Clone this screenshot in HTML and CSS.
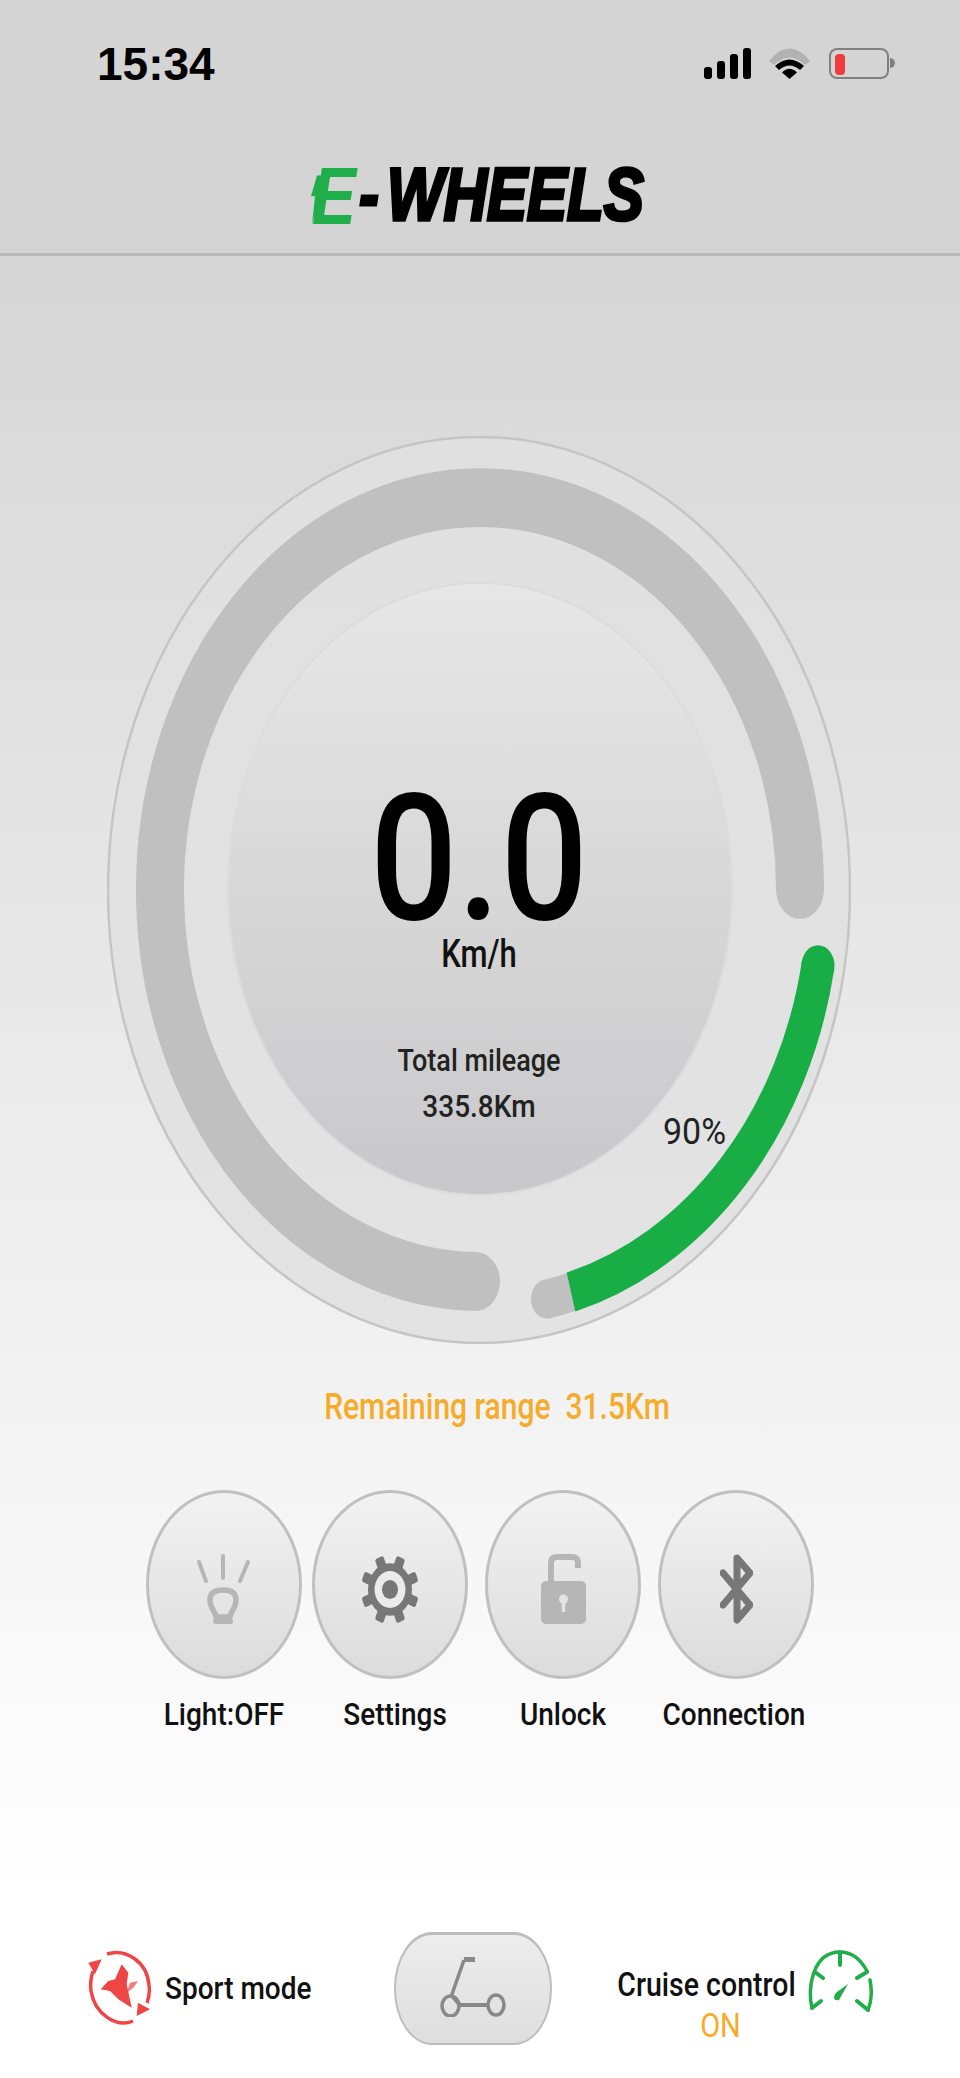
FILE: index.html
```html
<!DOCTYPE html>
<html lang="en">

<head>
    <meta charset="UTF-8">
    <meta name="viewport" content="width=device-width, initial-scale=1.0">
    <title>E-Wheels</title>
    <link rel="stylesheet" href="styles.css">
</head>

<body>
    <div class="page">
        <div class="top">
            <div class="status">
                <span class="time">15:34</span>
                <div class="status-icons">
                    <svg class="signal" width="47" height="31" viewBox="0 0 47 31">
                        <rect x="0" y="19" width="8" height="12" rx="3" />
                        <rect x="13" y="13" width="8" height="18" rx="3" />
                        <rect x="26" y="6" width="8" height="25" rx="3" />
                        <rect x="39" y="0" width="8" height="31" rx="3" />
                    </svg>
                    <svg class="wifi" width="42" height="31" viewBox="0 0 42 31">
                        <path d="M0 13 Q20.5 -12 41 13 L36 17 Q20.5 2 5 17 Z" fill="#b2b2b2" />
                        <path d="M6 18 Q20.5 5 35 18 L31 22 Q20.5 13 10 22 Z" fill="#000" />
                        <path d="M20.5 31 L13 24.5 Q20.5 17 28 24.5 Z" fill="#000" />
                    </svg>
                    <div class="battery">
                        <span class="battery-level"></span>
                    </div>
                    <span class="battery-nub"></span>
                </div>
            </div>
            <div class="brand">
                <div class="logo">
                    <span class="logo-e">E</span><span class="logo-dash">-</span><span class="logo-name">WHEELS</span>
                    <svg class="logo-bolt" width="18" height="40" viewBox="0 0 18 40">
                        <path d="M6 0 H18 L13 12 H11 L1 40 L4 17 H0 Z" fill="#1fae49" />
                    </svg>
                </div>
            </div>
        </div>

        <div class="main">
            <div class="gauge">
                <svg class="gauge-art" width="744" height="908" viewBox="0 0 744 908">
                    <defs>
                        <linearGradient id="ringFill" x1="0" y1="0" x2="0" y2="1">
                            <stop offset="0" stop-color="#e0e0e0" />
                            <stop offset="1" stop-color="#e3e3e3" />
                        </linearGradient>
                        <linearGradient id="discFill" x1="0" y1="0" x2="0" y2="1">
                            <stop offset="0" stop-color="#e7e7e7" />
                            <stop offset="1" stop-color="#c8c8ca" />
                        </linearGradient>
                    </defs>
                    <ellipse cx="372" cy="454" rx="371" ry="453" fill="url(#ringFill)" stroke="#c5c5c5" stroke-width="2.5" />
                    <ellipse cx="373" cy="453" rx="252" ry="306" fill="url(#discFill)" stroke="#dcdcdc" stroke-width="2" />
                    <g transform="translate(373 453.5) scale(1 1.225)" fill="none">
                        <path d="M320 0 A320 320 0 1 0 -4 320" stroke="#c0c0c0" stroke-width="48" stroke-linecap="round" />
                        <path d="M91 328.6 A341 341 0 0 1 67 334.3" stroke="#c0c0c0" stroke-width="32" stroke-linecap="round" />
                        <path d="M338 62 A344 341 0 0 1 91 328.6" stroke="#19ad45" stroke-width="33" />
                        <circle cx="338" cy="62" r="16.5" fill="#19ad45" />
                    </g>
                </svg>
                <div class="readout">
                    <div class="speed">0.0</div>
                    <div class="speed-unit">Km/h</div>
                    <div class="mileage-label">Total mileage</div>
                    <div class="mileage-value">335.8Km</div>
                </div>
                <span class="percent">90%</span>
            </div>

            <div class="range">Remaining range&nbsp; 31.5Km</div>

            <div class="actions">
                <div class="action action-light">
                    <div class="round-btn">
                        <svg width="54" height="72" viewBox="0 0 54 72" fill="none" stroke="#b6b6b6" stroke-linecap="round">
                            <path d="M2 9 L9 28 M26 3 V25 M51 9 L43 28" stroke-width="4" />
                            <path d="M19 64 C19 59 13 56 13 47 C13 39 19 37 26 37 C33 37 39 39 39 47 C39 56 33 59 33 64 Z" stroke-width="5.5" stroke-linejoin="round" />
                            <path d="M19 68 H33" stroke-width="6" />
                        </svg>
                    </div>
                    <span class="action-label">Light:OFF</span>
                </div>
                <div class="action action-settings">
                    <div class="round-btn">
                        <svg width="58" height="69" viewBox="0 0 58 69">
                            <g transform="translate(29 34.5) scale(1 1.19)" fill="#777">
                                <rect x="-4.5" y="-29" width="9" height="12" rx="2" transform="rotate(22.5)" />
                                <rect x="-4.5" y="-29" width="9" height="12" rx="2" transform="rotate(67.5)" />
                                <rect x="-4.5" y="-29" width="9" height="12" rx="2" transform="rotate(112.5)" />
                                <rect x="-4.5" y="-29" width="9" height="12" rx="2" transform="rotate(157.5)" />
                                <rect x="-4.5" y="-29" width="9" height="12" rx="2" transform="rotate(202.5)" />
                                <rect x="-4.5" y="-29" width="9" height="12" rx="2" transform="rotate(247.5)" />
                                <rect x="-4.5" y="-29" width="9" height="12" rx="2" transform="rotate(292.5)" />
                                <rect x="-4.5" y="-29" width="9" height="12" rx="2" transform="rotate(337.5)" />
                                <circle r="22" />
                                <circle r="15.5" fill="#ebebeb" />
                                <circle r="8" />
                            </g>
                        </svg>
                    </div>
                    <span class="action-label">Settings</span>
                </div>
                <div class="action action-unlock">
                    <div class="round-btn">
                        <svg width="45" height="70" viewBox="0 0 45 70">
                            <path d="M10 28 V9 Q10 3 16 3 H31 Q37 3 37 9 V14" fill="none" stroke="#b6b6b6" stroke-width="6" />
                            <rect x="0" y="27" width="45" height="43" rx="5" fill="#b6b6b6" />
                            <circle cx="22.5" cy="45" r="4.5" fill="#e4e4e4" />
                            <path d="M20.5 46 H24.5 L24 58 H21 Z" fill="#e4e4e4" />
                        </svg>
                    </div>
                    <span class="action-label">Unlock</span>
                </div>
                <div class="action action-connection">
                    <div class="round-btn">
                        <svg width="33" height="70" viewBox="0 0 33 70">
                            <path d="M3 19 L30 51 L17 66 V4 L30 19 L3 51" fill="none" stroke="#777" stroke-width="7" stroke-linejoin="round" stroke-linecap="round" />
                        </svg>
                    </div>
                    <span class="action-label">Connection</span>
                </div>
            </div>

            <div class="bottom">
                <div class="sport">
                    <svg width="66" height="80" viewBox="0 0 66 80">
                        <g fill="none" stroke="#ee4545" stroke-width="3.5">
                            <path d="M20 5 C38 -1 60 12 62 36 C63 44 62 49 60 54" />
                            <path d="M46 72 C30 79 8 66 4 42 C3 34 4 28 6 22" />
                        </g>
                        <g fill="#ee4545">
                            <path d="M1.3 13.7 L14.7 10.3 L8 25.3 Z" />
                            <path d="M63 60.3 L51 53.7 L49.7 67 Z" />
                            <path d="M34.7 15.3 L41.3 23.7 L39.7 35.3 L44.7 58.7 L31.3 50.3 L23 42 L13.7 40.3 L21.3 32 L28 30.3 Z" />
                            <path d="M43 33.7 L51.3 32 L46.3 38.7 L39.7 43.7 Z" opacity="0.7" />
                        </g>
                    </svg>
                    <span class="sport-label">Sport mode</span>
                </div>
                <div class="scooter-btn">
                    <svg width="66" height="60" viewBox="0 0 66 60" fill="none" stroke="#888">
                        <path d="M24 2.5 H35" stroke-width="5" />
                        <path d="M24 3 L11 40" stroke-width="3.5" />
                        <path d="M13 40 L20 48 H48" stroke-width="4" />
                        <ellipse cx="10.5" cy="49" rx="8.5" ry="10" stroke-width="3.5" />
                        <ellipse cx="56" cy="48" rx="8" ry="10" stroke-width="3.5" />
                    </svg>
                </div>
                <div class="cruise">
                    <span class="cruise-label">Cruise control</span>
                    <span class="cruise-state">ON</span>
                </div>
                <svg class="cruise-icon" width="66" height="62" viewBox="0 0 66 62" fill="none" stroke="#1fae49" stroke-width="3.5" stroke-linecap="round">
                    <path d="M5 58 C0 40 5 2 33 2 C46 2 54 10 60 21" />
                    <path d="M63 30 C65 40 65 50 61 60" />
                    <path d="M33 2 V15 M8 22 L16 28 M60 22 L50 28 M5 58 L14 51 M61 60 L50 51" stroke-width="4" />
                    <path d="M41 34 L32 50 Q27 51 27 47 Q27 44 30 42 Z" fill="#1fae49" stroke="none" />
                </svg>
            </div>
        </div>
    </div>
</body>

</html>
```

FILE: styles.css
```css
* {
    box-sizing: border-box;
}

body {
    margin: 0;
    font-family: Roboto, "Liberation Sans", sans-serif;
    color: #111;
}

.page {
    width: 960px;
    height: 2078px;
    overflow: hidden;
    display: flex;
    flex-direction: column;
}

.top {
    height: 256px;
    background: #d4d4d4;
    border-bottom: 3px solid #b8b8b8;
}

.status {
    display: flex;
    justify-content: space-between;
    padding: 49px 65px 0 97px;
    height: 150px;
}

.time {
    font-family: "Liberation Sans", sans-serif;
    font-weight: bold;
    font-size: 46px;
    line-height: 31px;
    color: #000;
}

.status-icons {
    display: flex;
    height: 31px;
    margin-top: -1px;
}

.signal {
    fill: #000;
    margin-right: 18px;
}

.wifi {
    margin-right: 18px;
}

.battery {
    width: 60px;
    height: 31px;
    border: 2px solid #808080;
    border-radius: 8px;
    padding: 4px 0 0 4px;
}

.battery-level {
    display: block;
    width: 10px;
    height: 21px;
    background: #ef3b3f;
    border-radius: 4px;
}

.battery-nub {
    width: 5px;
    height: 10px;
    margin: 10px 0 0 1px;
    background: #808080;
    border-radius: 0 5px 5px 0;
}

.brand {
    display: flex;
    padding-left: 312px;
}

.logo {
    position: relative;
    display: flex;
    align-items: center;
    height: 64px;
    margin-top: 13px;
    font-family: "Liberation Sans", sans-serif;
    font-style: italic;
    font-weight: bold;
    transform: scaleY(1.24);
    transform-origin: 0 50%;
}

.logo-e {
    font-size: 66px;
    line-height: 64px;
    color: #1fae49;
    width: 47px;
}

.logo-dash {
    font-size: 60px;
    line-height: 64px;
    color: #000;
    -webkit-text-stroke: 2.5px #000;
    width: 28px;
}

.logo-name {
    font-size: 60px;
    line-height: 64px;
    color: #000;
    -webkit-text-stroke: 3px #000;
}

.logo-bolt {
    position: absolute;
    left: -1px;
    top: 16px;
}

.main {
    flex: 1;
    background: linear-gradient(#d6d6d6, #fff 90%);
}

.gauge {
    position: relative;
    display: grid;
    width: 744px;
    height: 908px;
    margin: 180px 0 0 107px;
}

.gauge-art,
.readout {
    grid-area: 1 / 1;
}

.readout {
    padding-top: 366px;
    text-align: center;
}

.speed {
    font-size: 154px;
    font-weight: 500;
    line-height: 134px;
    height: 134px;
    color: #000;
    transform: scaleY(1.15);
    transform-origin: 50% 100%;
}

.speed-unit {
    margin-top: 3px;
    font-size: 31px;
    font-weight: 500;
    line-height: 30px;
    transform: scaleY(1.25);
}

.mileage-label {
    margin-top: 72px;
    font-size: 27px;
    font-weight: 500;
    line-height: 40px;
    color: #222;
    transform: scaleY(1.15);
}

.mileage-value {
    margin-top: 6px;
    font-size: 28px;
    font-weight: 500;
    line-height: 40px;
    color: #222;
    transform: scaleY(1.15);
}

.percent {
    position: absolute;
    left: 556px;
    top: 680px;
    font-size: 34px;
    line-height: 30px;
    color: #222;
    transform: scaleY(1.1);
}

.range {
    margin-top: 43px;
    padding-left: 34px;
    text-align: center;
    font-size: 30px;
    font-weight: 500;
    line-height: 40px;
    color: #f6ab2a;
    transform: scaleY(1.2);
}

.actions {
    display: flex;
    margin: 63px 0 0 146px;
}

.action {
    width: 156px;
}

.action-settings {
    margin-left: 10px;
}

.action-unlock,
.action-connection {
    margin-left: 17px;
}

.round-btn {
    display: flex;
    align-items: center;
    justify-content: center;
    height: 189px;
    padding-top: 9px;
    background: linear-gradient(#f2f2f2, #dcdcdc);
    border: 3px solid #c0c0c0;
    border-radius: 50%;
}

.action-label {
    display: block;
    margin-top: 16px;
    font-size: 28px;
    font-weight: 500;
    line-height: 40px;
    white-space: nowrap;
    text-align: center;
    transform: scaleY(1.15);
}

.action-settings .action-label {
    margin-left: 10px;
}

.action-connection .action-label {
    margin-left: -6px;
    margin-right: -2px;
}

.bottom {
    display: flex;
    align-items: flex-start;
    margin: 197px 0 0 87px;
}

.sport {
    display: flex;
    align-items: center;
    height: 113px;
}

.sport svg {
    margin: 0 12px 0 0;
}

.sport-label {
    font-size: 28px;
    font-weight: 500;
    line-height: 40px;
    transform: scaleY(1.15);
}

.scooter-btn {
    display: flex;
    align-items: center;
    justify-content: center;
    width: 158px;
    height: 113px;
    margin: 0 67px 0 82px;
    padding-bottom: 4px;
    background: linear-gradient(#ededed, #dedede);
    border: 2px solid #bdbdbd;
    border-top-width: 3px;
    border-radius: 38px / 56px;
}

.cruise {
    display: flex;
    flex-direction: column;
    align-items: center;
    margin-top: 37px;
    width: 176px;
}

.cruise-label {
    font-size: 28.5px;
    font-weight: 500;
    line-height: 34px;
    white-space: nowrap;
    transform: scaleY(1.15);
}

.cruise-state {
    margin: 6px 0 0 28px;
    font-size: 29px;
    line-height: 34px;
    color: #f6ab2a;
    transform: scaleY(1.15);
}

.cruise-icon {
    margin: 18px 0 0 12px;
}
```
